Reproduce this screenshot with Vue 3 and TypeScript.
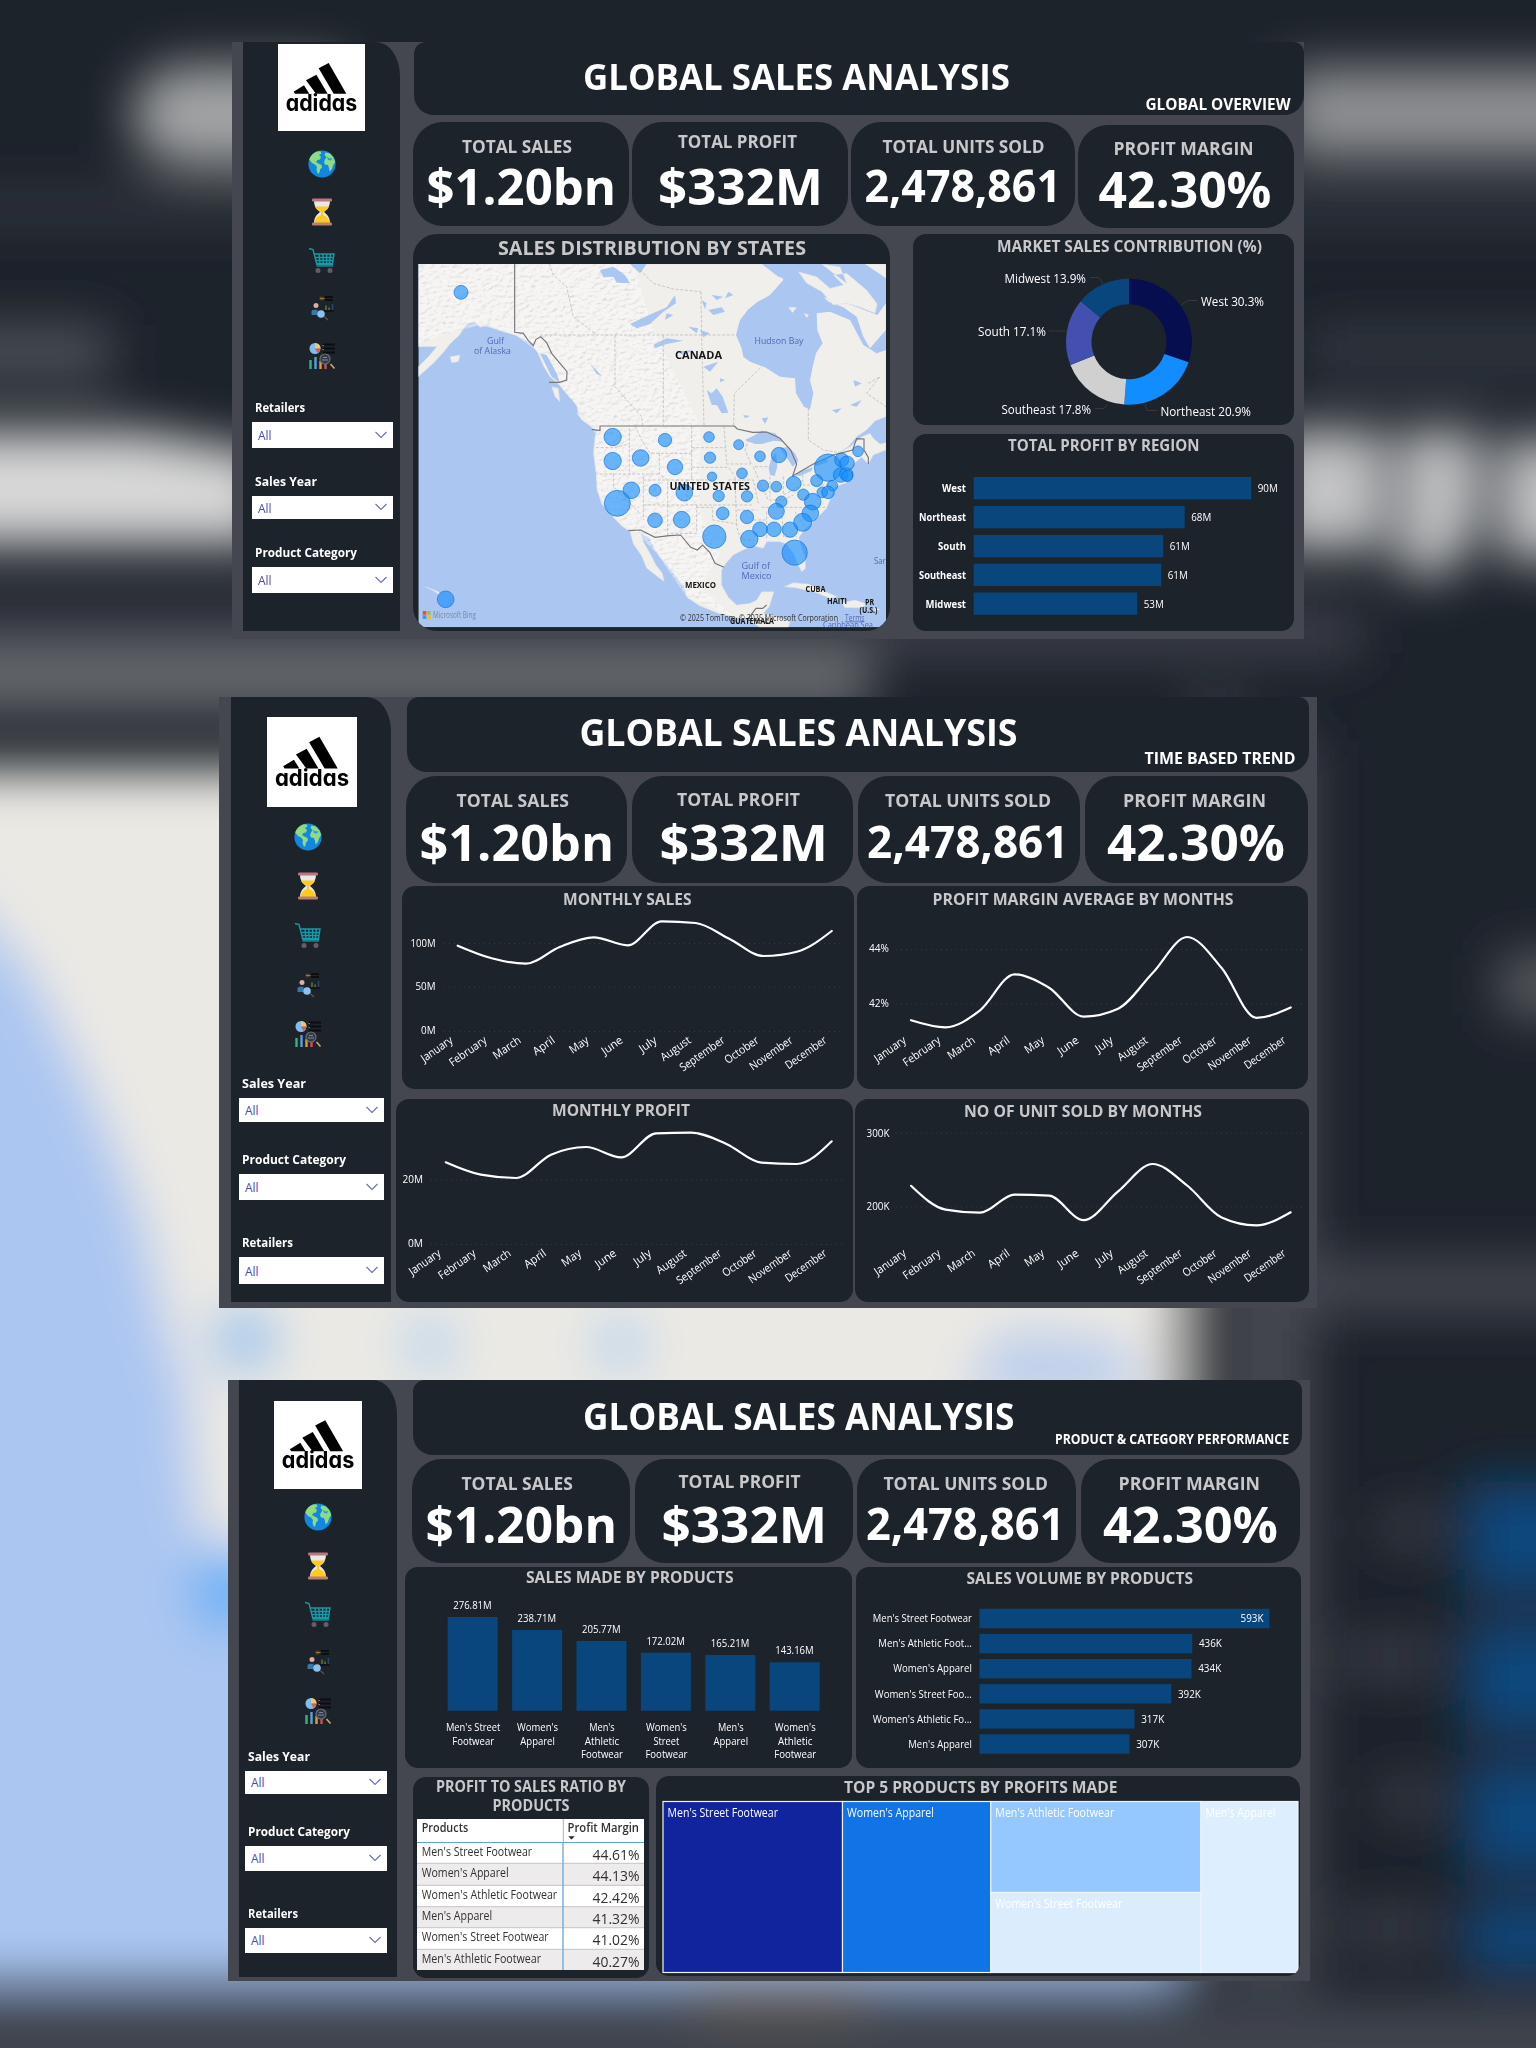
<script setup lang="ts">
type Label = [text: string, x: number, y: number, width: number, size: number, tone?: string]
type Rect = [x: number, y: number, w: number, h: number]
interface Kpi { box: Rect; label: Label; value: Label }
interface Line { box: Rect; title: Label; axis: Label[]; grid: number[]; gx: [number, number]; x0: number; x1: number; ys: number[]; monthY: number }
interface Board { id: string; header: Rect; heading: Label; sub: Label; kpis: Kpi[]; filters: [string, number][] }

const vb = (r: Rect): string => r.join(' ')

const boards: Board[] = [
  {
    id: 'd1',
    header: [414, 42, 890, 73],
    heading: ['GLOBAL SALES ANALYSIS', 583, 89.5, 427, 36],
    sub: ['GLOBAL OVERVIEW', 1145.5, 110, 145, 15.5],
    kpis: [
      { box: [413, 122, 216, 104], label: ['TOTAL SALES', 462, 152.5, 110, 17.5], value: ['$1.20bn', 426.5, 205, 189.5, 50] },
      { box: [632, 122, 216, 104], label: ['TOTAL PROFIT', 678, 148, 119, 17.5], value: ['$332M', 658, 205, 165, 50] },
      { box: [851, 122, 224, 104], label: ['TOTAL UNITS SOLD', 882.5, 152.5, 162, 17.5], value: ['2,478,861', 864.5, 202, 196.5, 44] },
      { box: [1078, 125, 216, 103], label: ['PROFIT MARGIN', 1113.5, 155, 140, 17.5], value: ['42.30%', 1098.5, 207.5, 173, 50] },
    ],
    filters: [['Retailers', 50], ['Sales Year', 62], ['Product Category', 102]],
  },
  {
    id: 'd2',
    header: [407, 697, 902, 75],
    heading: ['GLOBAL SALES ANALYSIS', 579.5, 745.5, 438, 37],
    sub: ['TIME BASED TREND', 1144.5, 764.3, 151, 16],
    kpis: [
      { box: [406, 776, 221, 107], label: ['TOTAL SALES', 456.5, 807, 112.5, 18], value: ['$1.20bn', 419.5, 861, 194.5, 51] },
      { box: [632, 776, 221, 107], label: ['TOTAL PROFIT', 677, 806, 123, 18], value: ['$332M', 659.5, 861, 168.5, 51] },
      { box: [858, 776, 222, 107], label: ['TOTAL UNITS SOLD', 885, 807, 166, 18], value: ['2,478,861', 867, 858, 201.5, 45.5] },
      { box: [1085, 776, 223, 107], label: ['PROFIT MARGIN', 1123, 807, 143, 18], value: ['42.30%', 1107, 861, 178, 51] },
    ],
    filters: [['Sales Year', 64], ['Product Category', 104], ['Retailers', 51]],
  },
  {
    id: 'd3',
    header: [413, 1380, 889, 75],
    heading: ['GLOBAL SALES ANALYSIS', 583, 1429.5, 431.5, 37],
    sub: ['PRODUCT & CATEGORY PERFORMANCE', 1055, 1444, 234, 13.5],
    kpis: [
      { box: [412, 1459, 218, 104], label: ['TOTAL SALES', 461.5, 1489.5, 111.5, 17.8], value: ['$1.20bn', 425.5, 1542.5, 191.5, 50.5] },
      { box: [635, 1459, 218, 104], label: ['TOTAL PROFIT', 678.5, 1488, 122, 17.8], value: ['$332M', 661.5, 1542.5, 165.5, 50.5] },
      { box: [857, 1459, 219, 104], label: ['TOTAL UNITS SOLD', 883.5, 1489.5, 164.5, 17.8], value: ['2,478,861', 866, 1540, 198.5, 45] },
      { box: [1081, 1459, 219, 104], label: ['PROFIT MARGIN', 1118.5, 1489.5, 141.5, 17.8], value: ['42.30%', 1103, 1543, 175, 50.5] },
    ],
    filters: [['Sales Year', 62], ['Product Category', 102], ['Retailers', 50]],
  },
]

const icons = ['globe', 'hourglass', 'cart', 'people', 'report']

/* state sales map: drawn on a 1500 x 1260 canvas, a third of that on screen */
const bubbles: [number, number, number][] = [
  [183, 217, 21], [137, 1138, 25], [638, 651, 26], [638, 723, 26], [795, 660, 20], [927, 651, 16], [1016, 674, 15],
  [722, 714, 25], [825, 741, 23], [930, 713, 17], [1080, 709, 16], [1137, 705, 23], [936, 770, 14], [1026, 760, 16],
  [1374, 694, 16], [1284, 743, 41], [1325, 720, 21], [1341, 730, 22], [1322, 765, 22], [1339, 763, 20], [1342, 768, 17],
  [1250, 782, 18], [1297, 797, 16], [1267, 817, 16], [1284, 817, 19], [694, 811, 25], [652, 850, 39], [765, 811, 18],
  [853, 818, 25], [956, 828, 17], [1041, 829, 17], [1089, 797, 17], [1129, 800, 16], [1181, 791, 22], [1210, 824, 17],
  [1238, 845, 25], [1144, 845, 17], [1129, 874, 24], [1231, 880, 25], [1208, 907, 27], [968, 880, 19], [1041, 891, 20],
  [765, 901, 22], [845, 899, 25], [943, 950, 35], [1080, 928, 22], [1122, 928, 22], [1170, 929, 23], [1048, 957, 26],
  [1184, 998, 38],
]
const mapLabels: Label[] = [
  ['Gulf', 487, 344, 17, 9.5, 'sea'], ['of Alaska', 474, 354, 37, 9.5, 'sea'], ['CANADA', 675, 358.5, 47, 11, 'land'],
  ['Hudson Bay', 754.5, 343.5, 49, 9.5, 'sea'], ['UNITED STATES', 669.5, 489.5, 80.5, 11, 'land'],
  ['Gulf of', 741.5, 569, 28.5, 9.5, 'sea'], ['Mexico', 741.5, 579, 30, 9.5, 'sea'], ['MEXICO', 685, 588, 31, 9.5, 'land'],
  ['CUBA', 805.5, 591.5, 20, 9, 'land'], ['HAITI', 827, 603.5, 20, 9, 'land'], ['PR', 865, 605, 9, 9, 'land'],
  ['(U.S.)', 859.5, 613, 18, 8.5, 'land'], ['Sarg', 874, 564, 16, 9, 'sea'], ['GUATEMALA', 730, 623.5, 44, 8, 'land'],
  ['Caribbean Sea', 823, 628, 50, 8.5, 'sea'], ['Microsoft Bing', 433, 618, 43, 8.5, 'credit'],
  ['© 2025 TomTom, © 2025 Microsoft Corporation', 680, 620.5, 158, 8.5, 'ink'], ['Terms', 845, 620.5, 19.5, 8.5, 'sea'],
]

/* market share donut */
const cx = 1129
const cy = 341.7
const shares: [number, string][] = [[30.3, '#060e4f'], [20.9, '#118dff'], [17.8, '#d0d0d1'], [17.1, '#4450b0'], [13.9, '#09467d']]
const slices = (() => {
  let acc = 0
  return shares.map(([v, color]) => {
    const a = (acc / 100) * Math.PI * 2
    acc += v
    const b = (acc / 100) * Math.PI * 2
    const p = (r: number, t: number) => `${(cx + r * Math.sin(t)).toFixed(2)} ${(cy - r * Math.cos(t)).toFixed(2)}`
    return { color, d: `M${p(63, a)}A63 63 0 0 1 ${p(63, b)}L${p(37.5, b)}A37.5 37.5 0 0 0 ${p(37.5, a)}Z` }
  })
})()
const shareLabels: Label[] = [
  ['Midwest 13.9%', 1004.5, 283, 81.5, 12.5], ['West 30.3%', 1201, 305.5, 63, 12.5], ['South 17.1%', 978, 336, 68, 12.5],
  ['Southeast 17.8%', 1001.5, 413.5, 89.5, 12.5], ['Northeast 20.9%', 1160.5, 415.7, 90.5, 12.5],
]

const regions: [string, number, number, number, string][] = [
  ['West', 24, 477, 277.5, '90M'], ['Northeast', 47, 506, 211, '68M'], ['South', 28, 535, 189.5, '61M'],
  ['Southeast', 47, 563.7, 187.5, '61M'], ['Midwest', 40.5, 592.5, 163.5, '53M'],
]

/* monthly trends */
const months: [string, number][] = [
  ['January', 36], ['February', 43], ['March', 31], ['April', 24], ['May', 21], ['June', 23], ['July', 19],
  ['August', 34], ['September', 52], ['October', 39], ['November', 50], ['December', 48],
]
const trends: Line[][] = [
  [
    {
      box: [402, 886, 452, 203], title: ['MONTHLY SALES', 563, 904.7, 128.5, 16], gx: [444, 844],
      axis: [['100M', 410.5, 947.4, 25, 11.5], ['50M', 415.5, 990.3, 20, 11.5], ['0M', 421, 1034, 14.5, 11.5]],
      grid: [943.5, 987, 1031.5], x0: 457.7, x1: 831.7, monthY: 1042,
      ys: [945.7, 958.3, 963.7, 947, 937.3, 945.3, 921.3, 923, 939, 956, 951.5, 931],
    },
    {
      box: [857, 886, 451, 203], title: ['PROFIT MARGIN AVERAGE BY MONTHS', 932.5, 904.7, 301, 16], gx: [896, 1303],
      axis: [['44%', 869, 952, 20, 11.5], ['42%', 869, 1007.2, 20, 11.5]],
      grid: [949.5, 1004], x0: 911, x1: 1290.7, monthY: 1042,
      ys: [1020.2, 1027.3, 1010.3, 974.3, 987.7, 1016.6, 1008.7, 973, 937, 968, 1017.8, 1007.5],
    },
  ],
  [
    {
      box: [396, 1099, 457, 203], title: ['MONTHLY PROFIT', 552, 1116, 138, 16], gx: [431, 844],
      axis: [['20M', 402.5, 1182.7, 20.5, 11.5], ['0M', 408, 1247.2, 15, 11.5]],
      grid: [1179.7, 1244.5], x0: 445.7, x1: 831.7, monthY: 1255,
      ys: [1162.3, 1174.7, 1178, 1154.7, 1147, 1157.3, 1133.3, 1132.7, 1144, 1162.7, 1164, 1141.3],
    },
    {
      box: [855, 1099, 454, 203], title: ['NO OF UNIT SOLD BY MONTHS', 964, 1117.3, 238, 16], gx: [896, 1303],
      axis: [['300K', 866.5, 1136.7, 23, 11.5], ['200K', 866.5, 1210.4, 23, 11.5]],
      grid: [1133.3, 1207], x0: 911, x1: 1290.7, monthY: 1255,
      ys: [1185.8, 1209.6, 1212.7, 1194.6, 1195.7, 1220.2, 1191.4, 1164, 1185.5, 1217.5, 1225.4, 1212.3],
    },
  ],
]
const px = (l: Line, i: number): number => l.x0 + ((l.x1 - l.x0) * i) / 11

function curve(l: Line): string {
  const h = (l.x1 - l.x0) / 11
  const y = l.ys
  const s = y.slice(1).map((v, i) => (v - y[i]) / h)
  const m = y.map((_, i) => {
    if (i === 0 || i === 11) return 0
    const a = s[i - 1]
    const b = s[i]
    return (Math.sign(a) + Math.sign(b)) * Math.min(Math.abs(a), Math.abs(b), Math.abs(a + b) / 4) || 0
  })
  m[0] = (3 * s[0] - m[1]) / 2
  m[11] = (3 * s[10] - m[10]) / 2
  let d = `M${l.x0} ${y[0]}`
  for (let i = 1; i < 12; i++) {
    const a = px(l, i - 1)
    const b = px(l, i)
    d += `C${a + h / 3} ${y[i - 1] + (m[i - 1] * h) / 3} ${b - h / 3} ${y[i] - (m[i] * h) / 3} ${b} ${y[i]}`
  }
  return d
}

/* product charts */
const columns: [string, number, number, [string, number][]][] = [
  ['276.81M', 1617, 1608.5, [["Men's Street", 54.5], ['Footwear', 42]]],
  ['238.71M', 1630, 1622, [["Women's", 41], ['Apparel', 34.5]]],
  ['205.77M', 1641, 1633.4, [["Men's", 25.5], ['Athletic', 34.5], ['Footwear', 42]]],
  ['172.02M', 1652.7, 1644.7, [["Women's", 41], ['Street', 26], ['Footwear', 42]]],
  ['165.21M', 1655, 1647, [["Men's", 25.5], ['Apparel', 34.5]]],
  ['143.16M', 1662.3, 1654, [["Women's", 41], ['Athletic', 34.5], ['Footwear', 42]]],
]
const volumes: [string, number, number, string][] = [
  ["Men's Street Footwear", 99, 290, '593K'], ["Men's Athletic Foot...", 93.5, 212.7, '436K'], ["Women's Apparel", 78.5, 212, '434K'],
  ["Women's Street Foo...", 97, 191.7, '392K'], ["Women's Athletic Fo...", 99, 155, '317K'], ["Men's Apparel", 63.5, 150, '307K'],
]
const ratios: [string, number, string][] = [
  ["Men's Street Footwear", 110.5, '44.61%'], ["Women's Apparel", 87, '44.13%'], ["Women's Athletic Footwear", 135.5, '42.42%'],
  ["Men's Apparel", 70.5, '41.32%'], ["Women's Street Footwear", 127, '41.02%'], ["Men's Athletic Footwear", 119.5, '40.27%'],
]
const rowEdges = [1842.3, 1863.3, 1885.3, 1906.7, 1927.7, 1949.3, 1970]
const tree: [Rect, string, string, number][] = [
  [[663, 1801.5, 179.5, 171], '#12239e', "Men's Street Footwear", 110.5],
  [[842.5, 1801.5, 148.3, 171], '#1073e6', "Women's Apparel", 87],
  [[990.8, 1801.5, 210.2, 91], '#94c8ff', "Men's Athletic Footwear", 119],
  [[990.8, 1892.5, 210.2, 80], '#dbecfd', "Women's Street Footwear", 127],
  [[1201, 1801.5, 97, 171], '#ddeeff', "Men's Apparel", 70],
]
</script>

<template>
  <div class="page">
    <svg class="backdrop" width="1536" height="2048" viewBox="0 0 1536 2048" aria-hidden="true">
      <defs>
        <filter id="soft" x="-20%" y="-20%" width="140%" height="140%"><feGaussianBlur stdDeviation="25" /></filter>
      </defs>
      <rect width="1536" height="2048" fill="#1d232b" />
      <g filter="url(#soft)">
        <rect x="-60" y="195" width="1700" height="26" fill="#363a42" />
        <path d="M170 66H340V165H170L135 140V90Z" fill="#a3a4a6" />
        <rect x="1285" y="68" width="320" height="90" fill="#8e9093" />
        <rect x="-60" y="325" width="170" height="56" fill="#4b4f56" />
        <rect x="1310" y="330" width="300" height="40" fill="#363a42" />
        <path d="M-60 432H140L270 455V545H-60Z" fill="#d8d8d8" />
        <path d="M1270 430H1385V550H1270ZM1400 430H1480V520L1450 575H1400ZM1500 440H1600V560H1500Z" fill="#c4c5c6" />
        <rect x="-60" y="610" width="1420" height="45" fill="#3f434b" />
        <rect x="-60" y="655" width="930" height="55" fill="#6a6d72" />
        <rect x="-60" y="770" width="1240" height="1210" fill="#ebe9e4" />
        <path d="M-60 870L30 970L90 1090L140 1210L165 1320L190 1400V1450L205 1560L330 1985H-60Z" fill="#abc6f1" />
        <path d="M200 1640H1180V1985H200Z" fill="#abc6f1" />
        <circle cx="245" cy="1340" r="34" fill="#97c4ec" />
        <circle cx="235" cy="1590" r="46" fill="#6ab1f6" />
        <circle cx="430" cy="1345" r="30" fill="#bcd6ec" />
        <circle cx="620" cy="1345" r="30" fill="#bcd6ec" />
        <path d="M1000 1330L1120 1340L1150 1400H960Z" fill="#b9cdec" />
        <rect x="1190" y="690" width="50" height="1300" fill="#34383f" />
        <rect x="1235" y="740" width="80" height="1250" fill="#44474f" />
        <rect x="1250" y="1260" width="350" height="52" fill="#44474f" />
        <rect x="1500" y="955" width="90" height="60" fill="#5a5d62" />
        <rect x="1380" y="1510" width="60" height="36" fill="#3c4148" />
        <rect x="1340" y="1640" width="100" height="36" fill="#3c4148" />
        <rect x="1380" y="1780" width="60" height="36" fill="#3c4148" />
        <rect x="1340" y="1910" width="100" height="36" fill="#3c4148" />
        <rect x="1465" y="1482" width="140" height="112" fill="#09467d" />
        <rect x="1465" y="1622" width="140" height="112" fill="#09467d" />
        <rect x="1465" y="1762" width="140" height="112" fill="#09467d" />
        <rect x="1465" y="1902" width="140" height="70" fill="#09467d" />
        <rect x="-60" y="2000" width="1700" height="120" fill="#3f444d" />
        <rect x="690" y="1970" width="180" height="40" fill="#6a6561" />
      </g>
    </svg>

    <svg class="symbols" width="0" height="0" aria-hidden="true">
      <symbol id="globe" viewBox="0 0 28 28">
        <circle cx="14" cy="14" r="13.6" fill="#1287e2" />
        <path d="M9 1.6A13.6 13.6 0 0 0 1.2 9.500L4 13L7 14.500L9 17L8.500 20L10 24L11.500 22.500L12 19.500L14 17.500L13.500 15L10.500 13.500L8 12L9.500 10L12 9.500L13 7L11 5L13.500 3.500L12.500 1.200Z" fill="#8ddc80" />
        <path d="M17.500 2.500L16.500 5L18.500 7L17 9.500L16 12L17 14.500L20 15L21 18L21.500 21.500L24 19L25 15.500L27.200 12L25.500 7.500L22 3.500Z" fill="#8ddc80" />
        <path d="M19 7L22 8.500L24.500 8L23 10.500L20 10Z" fill="#2a9ae0" />
      </symbol>
      <symbol id="hourglass" viewBox="0 0 28 28">
        <path d="M6 2.500H22C22 9 19 11.500 16 14C19 16.500 22 19 22 25.500H6C6 19 9 16.500 12 14C9 11.500 6 9 6 2.500Z" fill="#e9e7ea" />
        <path d="M7 8.500H21C20 11 18 12.500 15 14V17C18 18 21 20 21.500 25H6.500C7 20 10 18 13 17V14C10 12.500 8 11 7 8.500Z" fill="#fccb1b" />
        <rect x="4" y=".5" width="20" height="3" rx="1.200" fill="#b9797c" />
        <rect x="4" y="24.500" width="20" height="3" rx="1.200" fill="#b98071" />
      </symbol>
      <symbol id="cart" viewBox="0 0 28 28">
        <path d="M1 2.500L5 3.500L9 19H25M6.500 8H26L24.500 17.500H8.500M7.500 11.500H25.500M8 14.500H25M11 8L12 17.500M14.800 8L15.300 17.500M18.600 8V17.500M22.400 8L21.500 17.500" fill="none" stroke="#169aa8" stroke-width="1.400" />
        <path d="M8.500 20.500H25" stroke="#1f6470" stroke-width="1" />
        <circle cx="10" cy="24.500" r="2.500" fill="#685b66" /><circle cx="22" cy="24.500" r="2.500" fill="#685b66" />
      </symbol>
      <symbol id="people" viewBox="0 0 28 28">
        <circle cx="13.500" cy="4.500" r="2.300" fill="#4a3328" /><path d="M12 4.500H16.500" stroke="#a07a34" stroke-width="1.200" />
        <path d="M17 3H25M17 6H25" stroke="#0b0e13" stroke-width="1.800" />
        <circle cx="8" cy="11.500" r="2.500" fill="#e3aaa0" /><path d="M3.500 21V17.500Q3.500 15.800 6 15.800H9.500V21Z" fill="#3479ab" />
        <circle cx="13" cy="20" r="3.800" fill="#8fc2ea" /><path d="M16.500 22.800L20 26" stroke="#6b5045" stroke-width="1.300" />
        <path d="M18 11.500V16M21 13.500V16" stroke="#6c8236" stroke-width="1.300" /><path d="M24.500 10V16" stroke="#27486a" stroke-width="1.500" />
        <path d="M16 17H25.500" stroke="#0b0e13" stroke-width="1.300" />
      </symbol>
      <symbol id="report" viewBox="0 0 28 28">
        <circle cx="7" cy="6.500" r="5.500" fill="#7dbdf0" /><path d="M7 6.500V1A5.500 5.500 0 0 1 12.500 6.500Z" fill="#f3c667" /><path d="M7 6.500H12.500A5.500 5.500 0 0 1 9.500 11Z" fill="#e2574c" />
        <path d="M15 2.500H27M15 6.500H27M15 10.500H27" stroke="#0b0d11" stroke-width="2.200" /><path d="M14.500 3.500H16M14.500 7.500H16" stroke="#c95c46" stroke-width="1.200" />
        <path d="M2.500 18V27" stroke="#35b57d" stroke-width="2.400" /><path d="M7.500 15V27" stroke="#5a9fd8" stroke-width="2.400" />
        <path d="M12.500 19V27" stroke="#d7a23c" stroke-width="2.400" /><path d="M17.500 22V27" stroke="#d8504a" stroke-width="2.400" />
        <circle cx="17" cy="17" r="5" fill="#353b45" stroke="#666d79" stroke-width="1.200" /><path d="M14 18H20M15 15.500H19" stroke="#7b879a" stroke-width="1.200" />
        <path d="M22.500 22L26.500 26.500" stroke="#d9a565" stroke-width="1.600" />
      </symbol>
    </svg>

    <section v-for="b in boards" :key="b.id" class="board" :class="b.id">
      <aside class="side">
        <svg class="logo" viewBox="0 0 261 261">
          <path d="M122 73L152 57L205 149H167ZM84 109L115 92L149 149H114ZM47 143L78 124L94 149H51Z" fill="#000" />
          <text x="23" y="200" textLength="215" lengthAdjust="spacingAndGlyphs" class="brand">adidas</text>
        </svg>
        <nav class="nav">
          <svg v-for="i in icons" :key="i" class="icon" :class="i"><use :href="'#' + i" /></svg>
        </nav>
        <div class="filters">
          <template v-for="f in b.filters" :key="f[0]">
            <svg class="flabel" height="20" width="130"><text x="0" y="15" :textLength="f[1]" lengthAdjust="spacingAndGlyphs">{{ f[0] }}</text></svg>
            <div class="select">
              <span>All</span>
              <svg width="12" height="8" viewBox="0 0 12 8"><path d="M.5 1L6 6.500L11.500 1" fill="none" stroke="#6670bb" stroke-width="1.100" /></svg>
            </div>
          </template>
        </div>
      </aside>

      <main class="main">
        <svg class="tile header" :width="b.header[2]" :height="b.header[3]" :viewBox="vb(b.header)">
          <text class="bold white" :x="b.heading[1]" :y="b.heading[2]" :font-size="b.heading[4]" :textLength="b.heading[3]" lengthAdjust="spacingAndGlyphs">{{ b.heading[0] }}</text>
          <text class="bold white" :x="b.sub[1]" :y="b.sub[2]" :font-size="b.sub[4]" :textLength="b.sub[3]" lengthAdjust="spacingAndGlyphs">{{ b.sub[0] }}</text>
        </svg>

        <div class="kpis">
          <svg v-for="k in b.kpis" :key="k.label[0]" class="tile kpi" :width="k.box[2]" :height="k.box[3]" :viewBox="vb(k.box)">
            <text class="bold grey" :x="k.label[1]" :y="k.label[2]" :font-size="k.label[4]" :textLength="k.label[3]" lengthAdjust="spacingAndGlyphs">{{ k.label[0] }}</text>
            <text class="bold white" :x="k.value[1]" :y="k.value[2]" :font-size="k.value[4]" :textLength="k.value[3]" lengthAdjust="spacingAndGlyphs">{{ k.value[0] }}</text>
          </svg>
        </div>

        <div v-if="b.id === 'd1'" class="row overview">
          <svg class="tile map" width="477" height="397" viewBox="413 234 477 397">
            <defs>
              <clipPath id="frame"><rect x="55" y="132" width="1403" height="1090" /></clipPath>
              <clipPath id="west"><path d="M55 132H700L760 330L900 616V880L960 1000L900 1100L1000 1190L860 1130L770 1000L700 930L640 890L590 810L585 640L540 570L490 510L420 400L345 345L240 315L130 345L55 370Z" /></clipPath>
              <filter id="relief" x="0" y="0" width="100%" height="100%">
                <feTurbulence type="fractalNoise" baseFrequency=".06 .1" numOctaves="4" seed="8" />
                <feDiffuseLighting lighting-color="#fff" surfaceScale="5" diffuseConstant="1.150"><feDistantLight azimuth="225" elevation="60" /></feDiffuseLighting>
              </filter>
            </defs>
            <text class="bold grey" x="498" y="254.500" font-size="20" textLength="308" lengthAdjust="spacingAndGlyphs">SALES DISTRIBUTION BY STATES</text>
            <g transform="translate(400 220) scale(.33333)">
              <g clip-path="url(#frame)">
                <rect x="55" y="132" width="1403" height="1090" fill="#abc6f1" />
                <path class="ground" d="M55 132H1458V590L1425 603L1400 630L1370 650L1345 680L1310 702L1350 680L1385 650L1410 640L1420 655L1440 672L1458 668V690L1420 705L1405 732L1385 712L1365 728L1350 745L1358 775L1335 790L1305 800L1292 835L1280 865L1248 898L1215 928L1197 952L1202 975L1215 1010L1217 1045L1205 1055L1195 1035L1180 1000L1160 972L1140 965L1100 965L1090 985L1060 978L1030 990L1000 1005L978 1030L965 1050L965 1095L985 1132L1010 1155L1050 1150L1070 1140L1085 1115L1122 1115L1108 1160L1090 1180L1130 1190L1170 1205L1165 1222H1080L1050 1203L1000 1190L960 1182L900 1158L862 1133L853 1105L830 1072L790 1022L765 990L745 952L722 940L730 965L750 1000L768 1035L787 1060L793 1085L770 1068L740 1045L725 1008L700 972L690 935L665 918L640 892L605 852L592 812L588 760L580 700L585 650L592 632L572 600L535 580L530 555L497 518L475 492L450 470L432 442L415 402L400 378L380 362L345 345L300 332L262 316L240 322L225 306L200 312L178 346L150 372L128 400L100 430L55 470V440L85 410L110 380H55Z" />
                <path class="ground" d="M530 578L570 590L600 630L585 628L545 600ZM455 500L475 505L480 545L465 530ZM150 410L180 405L175 425L155 428ZM75 1100L90 1105L115 1115L120 1125L100 1112Z" />
                <path class="ground" d="M1153 1100L1180 1088L1225 1092L1265 1110L1312 1130L1290 1135L1240 1115L1185 1103ZM1325 1148L1365 1140L1402 1152L1385 1163L1335 1163ZM1422 1165L1440 1168L1425 1173Z" />
                <g clip-path="url(#west)"><rect class="relief" x="55" y="132" width="950" height="1090" filter="url(#relief)" /></g>
                <path class="water" d="M1008 345L1020 300L1045 268L1072 246L1110 225L1150 180L1130 132H1200L1230 190L1285 245L1330 262L1370 290L1390 350L1410 385L1440 350L1458 330V390L1430 400L1390 375L1350 300L1290 275L1250 280L1252 330L1268 370L1248 400L1238 440L1230 480L1240 520L1230 568L1212 560L1188 520L1185 475L1140 470L1095 442L1050 425L1030 410L1025 385Z" />
                <path class="water" d="M1085 132H1458V250L1432 285L1380 265L1330 245L1270 232L1200 190L1135 170Z" />
                <path class="ground" d="M1195 155L1250 170L1290 205L1330 195L1300 165L1340 160L1400 210L1432 252L1425 280L1380 262L1340 250L1300 255L1265 215L1220 190ZM1265 132L1300 160L1340 190L1320 140ZM1165 262L1190 262L1178 278ZM1212 280L1226 284L1220 294ZM1395 132L1458 175V132Z" />
                <path class="water" d="M600 150L640 140L675 165L690 190L650 188L640 170L610 172ZM690 312L740 288L800 262L825 225L828 250L790 275L750 312L710 325ZM760 375L800 355L850 362L800 372L765 385ZM800 280L820 285L795 300ZM920 510L935 520L950 505L968 530L985 578L965 580L950 555L935 555ZM905 240L920 250L915 268ZM935 225L970 230L950 240ZM925 270L965 262L975 275L940 285ZM985 215L1000 225L975 235ZM865 320L895 325L890 340ZM900 330L930 340L910 352ZM910 440L955 425L930 455ZM830 395L880 390L850 405ZM960 475L975 480L960 487ZM1035 660L1060 648L1085 632L1125 640L1150 665L1120 662L1085 672L1065 672ZM1106 745L1115 712L1128 700L1132 740L1124 768L1110 765ZM1140 685L1165 680L1185 700L1195 722L1178 740L1165 720ZM1183 766L1205 752L1238 742L1235 752L1200 768ZM1240 733L1280 716L1285 726L1250 738ZM1085 595L1105 592L1095 612ZM1030 585L1050 588L1035 595ZM1295 570L1325 565L1310 580ZM1360 480L1385 490L1365 500ZM1350 555L1385 540L1370 560ZM1400 630L1458 590V650L1430 640ZM570 430L605 468L590 462ZM690 132L740 132L720 160ZM420 400L440 405L470 460L480 490L455 470Z" />
                <path class="border dash" d="M420 345H1005M645 345V500L725 590L728 616M790 345V616M903 215L905 345L912 616M720 150L760 190L820 207L903 215M1001 616L1003 520L1085 440M1225 565V660L1270 690L1330 700M448 132L460 165L500 200L520 290L590 345M1430 400L1458 350M1405 490L1440 470L1400 520L1458 560" />
                <path class="border dash" d="M588 683H640L688 672V618M688 675V762M585 762H778M640 762V800L720 880M730 770V900M705 618L725 660L750 700H875M778 700V762L803 780V855M730 780H860M875 618V780M875 683H978M875 742H985L1000 762M972 618L980 732H1053M1053 732L1035 690L1045 660M860 780H935M860 780V855M730 855H1005M803 855V950M890 855V940H805M890 862H938V900L1012 912M1005 770L1010 920L1025 965M1005 855H1060M1012 870H1070M985 780H1060L1075 850M1065 740H1110M1060 740L1085 800L1105 840H1150L1180 825M1110 770V830M1150 770V825L1180 810L1208 790V765M1085 862H1280M1100 875V960M1145 875L1150 950H1190M1060 900H1100M1185 875L1215 920M1208 795H1290M1030 960H1060" />
                <path class="border" d="M344 132V337L370 340L385 362L400 377L408 358L422 350L440 368L455 400L480 430L501 455L500 480L478 487H447M575 628L600 632V618H1003L1012 627L1058 637L1100 636L1140 655L1172 690L1190 732L1178 768L1240 732L1300 705L1358 690L1370 656L1392 657L1392 690L1405 712V732M685 932L722 930L765 952L808 947L842 945L872 982L892 990L908 975L930 998L945 1030L972 1042M1045 1195L1068 1165H1088L1100 1155M1075 1200L1110 1210" />
                <circle v-for="(c, i) in bubbles" :key="i" class="bubble" :cx="c[0]" :cy="c[1]" :r="c[2]" />
                <path d="M68 1173H79V1184H68Z" fill="#f25022" /><path d="M81 1173H92V1184H81Z" fill="#9cc43a" />
                <path d="M68 1186H79V1197H68Z" fill="#3a9be0" /><path d="M81 1186H92V1197H81Z" fill="#f5b92b" />
              </g>
            </g>
            <svg x="418.300" y="264" width="467.700" height="363.300" viewBox="418.300 264 467.700 363.300">
              <text v-for="t in mapLabels" :key="t[0]" :class="t[5]" :x="t[1]" :y="t[2]" :font-size="t[4]" :textLength="t[3]" lengthAdjust="spacingAndGlyphs">{{ t[0] }}</text>
              <path d="M845 621.800H864.500" stroke="#5468b8" stroke-width=".8" />
            </svg>
          </svg>

          <div class="stack">
            <svg class="tile" width="381" height="191" viewBox="913 234 381 191">
              <text class="bold grey" x="997" y="251.700" font-size="16" textLength="265" lengthAdjust="spacingAndGlyphs">MARKET SALES CONTRIBUTION (%)</text>
              <path v-for="s in slices" :key="s.color" :d="s.d" :fill="s.color" />
              <path class="leader" d="M1090 277.500H1099L1103 284M1181 305L1188 300.500H1197M1049 331H1066M1095 408.500H1104L1107 404M1145 404L1147 410.500H1157" />
              <text v-for="t in shareLabels" :key="t[0]" class="small white" :x="t[1]" :y="t[2]" :font-size="t[4]" :textLength="t[3]" lengthAdjust="spacingAndGlyphs">{{ t[0] }}</text>
            </svg>
            <svg class="tile" width="381" height="197" viewBox="913 434 381 197">
              <text class="bold grey" x="1008" y="451" font-size="16" textLength="191.500" lengthAdjust="spacingAndGlyphs">TOTAL PROFIT BY REGION</text>
              <g v-for="r in regions" :key="r[0]">
                <rect x="973.700" :y="r[2]" :width="r[3]" height="22.300" fill="#09467d" />
                <text class="bold white" :x="966 - r[1]" :y="r[2] + 15.300" font-size="11.300" :textLength="r[1]" lengthAdjust="spacingAndGlyphs">{{ r[0] }}</text>
                <text class="small white" :x="973.700 + r[3] + 6.500" :y="r[2] + 15" font-size="11.300" textLength="20" lengthAdjust="spacingAndGlyphs">{{ r[4] }}</text>
              </g>
            </svg>
          </div>
        </div>

        <template v-if="b.id === 'd2'">
          <div v-for="(row, ri) in trends" :key="ri" class="row" :class="'trend' + ri">
            <svg v-for="l in row" :key="l.title[0]" class="tile" :width="l.box[2]" :height="l.box[3]" :viewBox="vb(l.box)">
              <text class="bold grey" :x="l.title[1]" :y="l.title[2]" :font-size="l.title[4]" :textLength="l.title[3]" lengthAdjust="spacingAndGlyphs">{{ l.title[0] }}</text>
              <path v-for="g in l.grid" :key="g" class="gridline" :d="`M${l.gx[0]} ${g}H${l.gx[1]}`" />
              <text v-for="t in l.axis" :key="t[0]" class="small white" :x="t[1]" :y="t[2]" :font-size="t[4]" :textLength="t[3]" lengthAdjust="spacingAndGlyphs">{{ t[0] }}</text>
              <path class="series" :d="curve(l)" />
              <text v-for="(m, i) in months" :key="m[0]" class="small white" text-anchor="end" font-size="11.300" :textLength="m[1]" lengthAdjust="spacingAndGlyphs" :transform="`translate(${px(l, i) - 4} ${l.monthY}) rotate(-35)`">{{ m[0] }}</text>
            </svg>
          </div>
        </template>

        <template v-if="b.id === 'd3'">
          <div class="row products">
            <svg class="tile" width="447" height="201" viewBox="405 1567 447 201">
              <text class="bold grey" x="526" y="1582.700" font-size="16" textLength="207.500" lengthAdjust="spacingAndGlyphs">SALES MADE BY PRODUCTS</text>
              <g v-for="(c, i) in columns" :key="c[0]">
                <rect :x="447.700 + i * 64.400" :y="c[1]" width="50" :height="1710.700 - c[1]" fill="#09467d" />
                <text class="small white" :x="453.200 + i * 64.400" :y="c[2]" font-size="11.500" textLength="38.500" lengthAdjust="spacingAndGlyphs">{{ c[0] }}</text>
                <text v-for="(w, j) in c[3]" :key="w[0]" class="small white" :x="473.200 + i * 64.400 - w[1] / 2" :y="1731.300 + j * 13.500" font-size="11.500" :textLength="w[1]" lengthAdjust="spacingAndGlyphs">{{ w[0] }}</text>
              </g>
            </svg>
            <svg class="tile" width="445" height="201" viewBox="856.500 1567 445 201">
              <text class="bold grey" x="967" y="1584" font-size="16" textLength="226.500" lengthAdjust="spacingAndGlyphs">SALES VOLUME BY PRODUCTS</text>
              <g v-for="(v, i) in volumes" :key="v[0]">
                <rect x="980" :y="1608.800 + i * 25.100" :width="v[2]" height="19.400" fill="#09467d" />
                <text class="small white" :x="972.300 - v[1]" :y="1622.200 + i * 25.100" font-size="11.500" :textLength="v[1]" lengthAdjust="spacingAndGlyphs">{{ v[0] }}</text>
                <text class="small white" :x="i === 0 ? 1241 : 980 + v[2] + 6.700" :y="1622.200 + i * 25.100" font-size="11.500" textLength="23" lengthAdjust="spacingAndGlyphs">{{ v[3] }}</text>
              </g>
            </svg>
          </div>
          <div class="row ratios">
            <svg class="tile ratio" width="236" height="201" viewBox="413 1777 236 201">
              <text class="bold grey" x="436" y="1791.700" font-size="16" textLength="190" lengthAdjust="spacingAndGlyphs">PROFIT TO SALES RATIO BY</text>
              <text class="bold grey" x="492.500" y="1811" font-size="16" textLength="77" lengthAdjust="spacingAndGlyphs">PRODUCTS</text>
              <rect x="417" y="1819" width="227" height="151" fill="#fff" />
              <g v-for="(r, i) in ratios" :key="r[0]">
                <rect v-if="i % 2" x="417" :y="rowEdges[i]" width="227" :height="rowEdges[i + 1] - rowEdges[i]" fill="#edebeb" />
                <path v-if="i" :d="`M417 ${rowEdges[i]}H644`" stroke="#c4c4c6" stroke-width="1" />
                <text class="ink" x="421.700" :y="rowEdges[i] + 13.200" font-size="12" :textLength="r[1]" lengthAdjust="spacingAndGlyphs">{{ r[0] }}</text>
                <text class="ink" x="592.500" :y="rowEdges[i] + 17.500" font-size="15" textLength="47" lengthAdjust="spacingAndGlyphs">{{ r[2] }}</text>
              </g>
              <path d="M417 1842.500H644" stroke="#5ba3e0" stroke-width="1" />
              <path d="M563 1842.500V1970" stroke="#6bade6" stroke-width="1.400" /><path d="M563.300 1819V1842" stroke="#b0b0b4" stroke-width="1" />
              <text class="ink bolder" x="421.700" y="1831.700" font-size="12" textLength="46.500" lengthAdjust="spacingAndGlyphs">Products</text>
              <text class="ink bolder" x="567.500" y="1831.700" font-size="12" textLength="71.500" lengthAdjust="spacingAndGlyphs">Profit Margin</text>
              <path d="M568.300 1836.300H574.700L571.500 1839.500Z" fill="#252423" />
            </svg>
            <svg class="tile" width="644" height="200" viewBox="656 1776 644 200">
              <text class="bold grey" x="844" y="1793" font-size="16" textLength="273.500" lengthAdjust="spacingAndGlyphs">TOP 5 PRODUCTS BY PROFITS MADE</text>
              <g v-for="t in tree" :key="t[2]">
                <rect :x="t[0][0]" :y="t[0][1]" :width="t[0][2]" :height="t[0][3]" :fill="t[1]" stroke="#eef3f9" stroke-width="1.200" />
                <text class="small white" :x="t[0][0] + 4.500" :y="t[0][1] + 15.500" font-size="12" :textLength="t[3]" lengthAdjust="spacingAndGlyphs">{{ t[2] }}</text>
              </g>
            </svg>
          </div>
        </template>
      </main>
    </section>
  </div>
</template>

<style>
html, body { margin: 0; background: #1d232b; }
</style>

<style scoped>
.page { position: relative; width: 1536px; height: 2048px; overflow: hidden; font-family: "Open Sans", "Noto Sans", sans-serif; display: flex; flex-direction: column; align-items: flex-start; }
.backdrop { position: absolute; inset: 0; }
.symbols { position: absolute; }
svg { display: block; flex: none; }
text { font-family: "Open Sans", "Noto Sans", sans-serif; white-space: pre; }

.board { position: relative; display: flex; align-items: flex-start; box-sizing: border-box; flex: none; background: #44474f; overflow: hidden; }
.d1 { width: 1072px; height: 597px; margin: 42px 0 0 232px; padding-left: 11px; }
.d2 { width: 1098px; height: 611px; margin: 58px 0 0 219px; padding-left: 12px; }
.d3 { width: 1082px; height: 601px; margin: 72px 0 0 228px; padding-left: 11px; }

.side { display: flex; flex-direction: column; flex: none; background: #1d232b; border-top-right-radius: 24px 34px; }
.d1 .side { width: 156.500px; height: 589px; margin-right: .5px; }
.d2 .side { width: 160px; height: 605px; }
.d3 .side { width: 158px; height: 597px; }
.logo { background: #fff; }
.d1 .logo { width: 87px; height: 87px; margin: 2px 0 0 35px; }
.d2 .logo { width: 90px; height: 90px; margin: 20px 0 0 35.500px; }
.d3 .logo { width: 88px; height: 88px; margin: 21px 0 0 35px; }
.brand { font-family: "Inter", "Open Sans", sans-serif; font-weight: 650; font-size: 68px; font-feature-settings: "cv11"; fill: #000; }

.nav { display: flex; flex-direction: column; align-items: center; justify-content: space-around; }
.d1 .nav { height: 240px; margin: 9px 0 0 1px; }
.d2 .nav { height: 247px; margin: 5px 7px 0 0; }
.d3 .nav { height: 242px; margin: 4px 1px 0 0; }
.icon { width: 28px; height: 28px; }

.filters { display: grid; justify-items: start; }
.d1 .filters { width: 141px; margin: 16px 0 0 9px; grid-template-rows: 26px 26px 48px 23px 48px 26px; }
.d2 .filters { width: 144.500px; margin: 15px 0 0 8px; grid-template-rows: 24px 24px 52px 26px 57px 27px; }
.d3 .filters { width: 142px; margin: 11px 0 0 6px; grid-template-rows: 24.500px 23px 52px 25px 57px 25px; }
.flabel { align-self: end; margin: 0 0 5px 3px; }
.flabel text { font-size: 12.500px; font-weight: 700; fill: #fff; }
.select { display: flex; align-items: center; justify-content: space-between; box-sizing: border-box; width: 100%; padding: 2px 6px 0 6px; background: #fff; color: #4a4aa8; font-size: 12px; line-height: 18px; }
.select svg { margin-top: -3px; }

.main { display: flex; flex-direction: column; flex: none; }
.d1 .main { margin-left: 13px; }
.d2 .main { margin-left: 4px; }
.d3 .main { margin-left: 8px; }
.tile { background: #1d232b; border-radius: 13px; overflow: hidden; }
.header { border-radius: 12px 10px 20px 20px; }
.d1 .header { margin-left: 1px; }
.d2 .header { margin-left: 12px; }
.d3 .header { margin-left: 8px; }
.kpis { display: flex; justify-content: space-between; align-items: flex-start; }
.kpi { border-radius: 30px; }
.d1 .kpis { width: 881px; height: 104px; margin-top: 7px; }
.d1 .kpi:last-child { margin-top: 3px; }
.d2 .kpis { width: 902px; height: 107px; margin: 4px 0 0 11px; }
.d3 .kpis { width: 888px; height: 104px; margin: 4px 0 0 7px; }
.row { display: flex; align-items: flex-start; }
.overview { justify-content: space-between; width: 881px; margin-top: 8px; }
.map { border-radius: 24px; }
.stack { display: flex; flex-direction: column; gap: 9px; }
.trend0 { gap: 3px; margin: 3px 0 0 7px; }
.trend1 { gap: 2px; margin: 10px 0 0 1px; }
.products { gap: 4px; margin-top: 4px; }
.ratios { gap: 7px; margin: 8px 0 0 8px; }
.ratio { margin-top: 1px; }

.white { fill: #fff; }
.grey { fill: #c8c8ca; }
.bold { font-weight: 700; }
.bolder { font-weight: 600; }
.small { font-weight: 500; }
.ink { fill: #323130; }
.sea { fill: #5468b8; }
.land { fill: #141414; font-weight: 700; }
.credit { fill: #7d8696; }
.ground { fill: #f1efeb; stroke: #d5dbe6; stroke-width: 1.500; }
.water { fill: #abc6f1; }
.relief { opacity: .4; mix-blend-mode: multiply; }
.border { fill: none; stroke: #77777a; stroke-width: 3.500; }
.border.dash { stroke: #c0beb9; stroke-width: 2.500; stroke-dasharray: 9 5; }
.bubble { fill: #118dff; fill-opacity: .62; stroke: #0d6fd6; stroke-opacity: .75; stroke-width: 2.500; }
.leader { fill: none; stroke: #343941; stroke-width: 1; }
.gridline { stroke: #343a42; stroke-width: 1; stroke-dasharray: 1 4; }
.series { fill: none; stroke: #fff; stroke-width: 2.200; stroke-linecap: round; }
</style>
